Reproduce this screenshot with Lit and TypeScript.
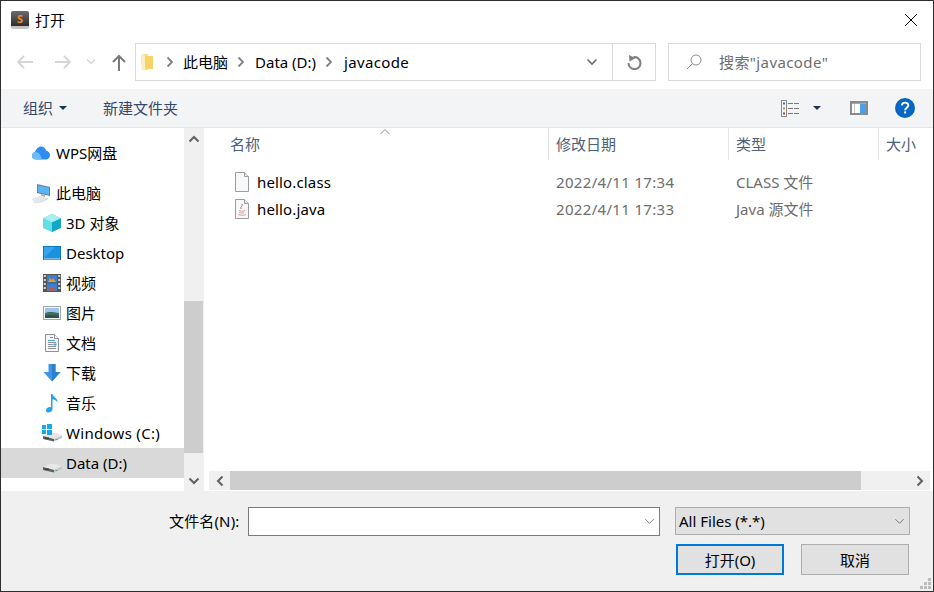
import { LitElement, html, css, svg } from "lit";
import { customElement } from "lit/decorators.js";

const chevron = (d: string, color = "#606060", w = 2, size = 12) => html`<svg width=${size} height=${size} viewBox="0 0 12 12" fill="none" stroke=${color} stroke-width=${w}><path d=${d}/></svg>`;
const CH_UP = "M1.5 8.5 6 4l4.5 4.5";
const CH_DOWN = "M1.5 3.5 6 8l4.5-4.5";
const CH_LEFT = "M8.5 1.5 4 6l4.5 4.5";
const CH_RIGHT = "M3.5 1.5 8 6l-4.5 4.5";

const disk = svg`<path d="M1 13 8 10h6.500L20 12.500 12 16z" fill="#e6e6e6"/><path d="M1 13 12 16v2.500L1 16z" fill="#5c5f61"/><path d="M12 16l8-3.500V15l-8 3.500z" fill="#c4c7c9"/><rect x="3" y="14.600" width="4" height="1" fill="#333"/><rect x="13.500" y="16" width="2" height="1" fill="#4fb35f"/>`;

const icons: Record<string, unknown> = {
  cloud: html`<svg width="20" height="16" viewBox="0 0 20 16"><path d="M4.5 14.5A3.8 3.8 0 0 1 1 10.6c0-1.9 1.3-3.3 3-3.6C5 4 7.300 1.500 10 1.500c2.600 0 4.700 1.800 5.200 4.300 2.200.3 3.800 2.200 3.800 4.400 0 2.400-1.900 4.300-4.200 4.300z" fill="#2f8cf0"/><path d="M4.500 14.500c-2 0-3.500-1.700-3.500-3.900 0-1.900 1.300-3.300 3-3.600 2.500-.4 4.500 1 5.500 3.500.8 2 1.500 4 1.500 4z" fill="#6dbcf8"/></svg>`,
  pc: html`<svg width="20" height="20" viewBox="0 0 20 20"><path d="M6 1l13 3v9L6 10z" fill="#6b7e8d"/><path d="M7 2.300l11 2.500v7L7 9.300z" fill="#58b4f4"/><path d="M10 11l4 1v2l-4-1z" fill="#a9b2b9"/><path d="M1 16l8-3 8 2-7 4H3z" fill="#e4e6e8"/><path d="M3 19h7l7-4v1l-7 3.500H3z" fill="#c6cacd"/></svg>`,
  cube: html`<svg width="18" height="18" viewBox="0 0 18 18"><path d="M9 0l9 4.300v9.400L9 18 0 13.700V4.300z" fill="#3dd0dc"/><path d="M9 0l9 4.300L9 8.500 0 4.300z" fill="#a4f0f2"/><path d="M9 8.500V18l9-4.300V4.300z" fill="#12a7c4"/><path d="M0 4.300 9 8.500V18L0 13.700z" fill="#62e0e4"/></svg>`,
  desktop: html`<svg width="18" height="14" viewBox="0 0 18 14"><rect width="18" height="14" fill="#0a76c8"/><rect x="1" y="1" width="16" height="11" fill="#35a6ee"/><path d="M1 12 12 1h5v11z" fill="#1d90de"/><rect x="1" y="12.400" width="16" height="1" fill="#bfe3fa"/></svg>`,
  video: html`<svg width="18" height="18" viewBox="0 0 18 18"><rect width="18" height="18" fill="#555"/><g fill="#ddd"><rect x=".8" y="1" width="2" height="2"/><rect x=".8" y="5" width="2" height="2"/><rect x=".8" y="9" width="2" height="2"/><rect x=".8" y="13" width="2" height="2"/><rect x="15.200" y="1" width="2" height="2"/><rect x="15.200" y="5" width="2" height="2"/><rect x="15.200" y="9" width="2" height="2"/><rect x="15.200" y="13" width="2" height="2"/></g><rect x="4" y="1" width="10" height="7.500" fill="#3c7fd8"/><rect x="4" y="9.500" width="10" height="7.500" fill="#3c7fd8"/><path d="M5 8l2-4 2 2 1-2 3 4z" fill="#d9a326"/><path d="M5 16.500l2-4 2 2 1-2 3 4z" fill="#d2562c"/></svg>`,
  image: html`<svg width="18" height="14" viewBox="0 0 18 14"><rect x=".5" y=".5" width="17" height="13" fill="#f4f6f8" stroke="#a4a8ac"/><rect x="2" y="2" width="14" height="10" fill="#9dc4ee"/><path d="M2 7c3-1.500 7-1.500 14 0v5H2z" fill="#3f6f5c"/><path d="M2 9.500c5-1 9-.5 14 0V12H2z" fill="#2f5248"/></svg>`,
  doc: html`<svg width="14" height="18" viewBox="0 0 14 18"><path d="M.5.500h9l4 4v13H.5z" fill="#f4f5f6" stroke="#8d9296"/><path d="M9.500.500v4h4" fill="#fff" stroke="#8d9296"/><g stroke="#4aa0dc"><path d="M5 3.500h3"/><path d="M3 6.500h7"/></g><g stroke="#8d9296"><path d="M3 8.500h8M3 10.500h5M3 12.500h8M3 14.500h8"/></g><rect x="8.500" y="9.500" width="3" height="2" fill="#4aa0dc"/></svg>`,
  down: html`<svg width="18" height="18" viewBox="0 0 18 18"><path d="M5.500 0h7v8H17.500L9 17.500.5 8h5z" fill="#3e95e6"/><path d="M9 0h3.500v8h5L9 17.500z" fill="#2e7fcf"/></svg>`,
  music: html`<svg width="12" height="19" viewBox="0 0 12 19"><path d="M5 0h1.500c.4 3 5.500 4 5 8.500C10.500 6.500 8.500 5.500 6.500 5.200V15c0 2.200-2 3.600-4 3.600C1 18.600 0 17.700 0 16.400c0-2 2-3.400 3.800-3.400.5 0 .9.100 1.200.2z" fill="#22a4f0"/></svg>`,
  win: html`<svg width="20" height="19" viewBox="0 0 20 19"><g transform="translate(0 -1)">${disk}</g><g fill="#14a9ee"><rect x="0" y="1" width="4" height="4"/><rect x="5" y="0" width="5" height="5"/><rect x="0" y="6" width="4" height="4"/><rect x="5" y="6" width="5" height="5"/></g></svg>`,
  disk: html`<svg width="20" height="19" viewBox="0 0 20 19">${disk}</svg>`,
};

const nav = [
  { icon: "cloud", label: "WPS网盘", top: true },
  { icon: "pc", label: "此电脑", top: true, gap: true },
  { icon: "cube", label: "3D 对象" },
  { icon: "desktop", label: "Desktop" },
  { icon: "video", label: "视频" },
  { icon: "image", label: "图片" },
  { icon: "doc", label: "文档" },
  { icon: "down", label: "下载" },
  { icon: "music", label: "音乐" },
  { icon: "win", label: "Windows (C:)", wide: true },
  { icon: "disk", label: "Data (D:)" , selected: true },
];

const blankFile = html`<svg width="16" height="20" viewBox="0 0 16 20"><path d="M1.500.500h9l4 4v15h-13z" fill="#f6f8fa" stroke="#9a9ea2"/><path d="M10.500.500v4h4" fill="#e8e8e8" stroke="#9a9ea2"/></svg>`;
const javaFile = html`<svg width="16" height="20" viewBox="0 0 16 20"><path d="M1.500.500h9l4 4v15h-13z" fill="#f6f8fa" stroke="#9a9ea2"/><path d="M10.500.500v4h4" fill="#e8e8e8" stroke="#9a9ea2"/><path d="M8 5c1 2-2 3-1 5" fill="none" stroke="#dc6b60"/><path d="M5 11.500c2 1 4 1 6 0M5 13.500c2 .8 4 .8 5 0M4 15.500c3 1 6 1 8 0" fill="none" stroke="#e59a92"/></svg>`;

const files = [
  { name: "hello.class", date: "2022/4/11 17:34", type: "CLASS 文件", icon: blankFile },
  { name: "hello.java", date: "2022/4/11 17:33", type: "Java 源文件", icon: javaFile },
];

@customElement("app-root")
export class AppRoot extends LitElement {
  static styles = css`
    :host {
      display: flex;
      flex-direction: column;
      box-sizing: border-box;
      width: 934px;
      height: 592px;
      border: 1px solid #2f2f2f;
      background: #fff;
      overflow: hidden;
      font: 15px/20px "Noto Sans", "Noto Sans CJK SC", sans-serif;
      color: #000;
    }
    svg { display: block; flex: none; }
    .title { height: 37px; display: flex; align-items: center; flex: none; }
    .app-icon { margin-left: 10px; width: 18px; height: 18px; border-radius: 2px; background: linear-gradient(#6a6a6a, #2c2c2c 85%, #c4c4c4 86%); display: flex; align-items: center; justify-content: center; color: #f08c25; font-size: 11px; line-height: 15px; font-weight: 700; padding-bottom: 3px; box-sizing: border-box; }
    .title-text { margin-left: 6px; flex: 1; }
    .close { margin-right: 15px; }
    .navbar { height: 51px; flex: none; display: flex; align-items: flex-start; padding-top: 5px; box-sizing: border-box; }
    .navbtns { width: 134px; height: 38px; display: flex; align-items: center; flex: none; }
    .navbtns svg:nth-child(1) { margin-left: 15px; }
    .navbtns svg:nth-child(2) { margin-left: 20px; }
    .navbtns svg:nth-child(3) { margin-left: 14px; }
    .navbtns svg:nth-child(4) { margin-left: 16px; }
    .address { width: 521px; height: 38px; box-sizing: border-box; border: 1px solid #d9d9d9; display: flex; align-items: center; flex: none; }
    .address .folder { margin-left: 5px; }
    .crumb { margin-left: 7px; margin-right: 8px; }
    .crumb-first { margin-left: 11px; margin-right: 7px; }
    .crumb-last { margin-left: 7px; margin-right: 9px; }
    .stretched { letter-spacing: .35px; }
    .path-fill { flex: 1; }
    .addr-chev { margin-right: 14px; }
    .refresh { width: 42px; height: 36px; border-left: 1px solid #d9d9d9; display: flex; align-items: center; justify-content: center; }
    .search { margin-left: 12px; width: 253px; height: 38px; box-sizing: border-box; border: 1px solid #d9d9d9; display: flex; align-items: center; flex: none; color: #6d6d6d; letter-spacing: .4px; }
    .search svg { margin-left: 17px; margin-right: 17px; }
    .toolbar { height: 39px; flex: none; box-sizing: border-box; background: #f3f4f6; border-bottom: 1px solid #e6e6e6; display: flex; align-items: center; color: #33496b; }
    .tb-org { margin-left: 22px; }
    .caret { margin-left: 6px; width: 0; height: 0; border: 4px solid transparent; border-top: 4px solid #1d3557; border-bottom: 0; }
    .tb-new { margin-left: 36px; flex: 1; }
    .tb-view { margin-right: 14px; }
    .tb-caret { margin-left: 0; margin-right: 29px; }
    .tb-pane { margin-right: 27px; }
    .tb-help { margin-right: 18px; }
    .main { flex: 1; min-height: 0; display: flex; }
    .sidebar { width: 183px; flex: none; padding-top: 10px; box-sizing: border-box; }
    .row { height: 30px; display: flex; align-items: center; white-space: nowrap; }
    .row.gap { margin-top: 10px; }
    .row.selected { background: #d9d9d9; }
    .row.wide { letter-spacing: .3px; }
    .row .ico { width: 20px; display: flex; justify-content: center; align-items: center; flex: none; margin-left: 41px; margin-right: 4px; }
    .row.top .ico { margin-left: 30px; margin-right: 5px; }
    .vscroll { width: 20px; flex: none; background: #f0f0f0; display: flex; flex-direction: column; }
    .sbtn { height: 21px; width: 19px; display: flex; align-items: center; justify-content: center; flex: none; }
    .vspace1 { height: 152px; flex: none; }
    .vthumb { height: 152px; width: 19px; flex: none; background: #cdcdcd; }
    .vspace2 { flex: 1; }
    .splitter { width: 5px; flex: none; }
    .content { flex: 1; min-width: 0; display: flex; flex-direction: column; position: relative; }
    .sort { position: absolute; left: 170px; top: 0; }
    .list { flex: 1; min-height: 0; overflow: hidden; }
    .cols { display: grid; grid-template-columns: 340px 180px 150px 1fr; }
    .head { height: 32px; color: #4c607a; }
    .head > div { display: flex; align-items: center; box-sizing: border-box; padding-left: 7px; border-right: 1px solid #e5e5e5; white-space: nowrap; overflow: hidden; }
    .head > div:first-child { padding-left: 21px; }
    .head > div:last-child { border-right: 0; }
    .rows { padding-top: 8px; }
    .file { height: 27px; align-items: center; color: #6d6d6d; }
    .file > div { padding-left: 7px; white-space: nowrap; }
    .file .date { letter-spacing: .33px; }
    .file .fname { display: flex; align-items: center; padding-left: 25px; color: #000; letter-spacing: .15px; }
    .file .fname svg { margin-right: 7px; }
    .hscroll { height: 19px; flex: none; width: 721px; display: flex; background: #f0f0f0; margin-bottom: 1px; align-items: center; }
    .hbtn { width: 21px; height: 19px; display: flex; align-items: center; justify-content: center; flex: none; }
    .hthumb { width: 631px; height: 19px; background: #cdcdcd; flex: none; }
    .hspace { flex: 1; display: flex; justify-content: flex-end; }
    .bottom { height: 100px; flex: none; background: #f0f0f0; box-sizing: border-box; padding-top: 16px; position: relative; }
    .line1 { display: flex; align-items: flex-start; }
    .fn-label { margin-left: 168px; line-height: 29px; white-space: nowrap; width: 79px; flex: none; letter-spacing: .15px; }
    .fn-input { width: 412px; height: 29px; box-sizing: border-box; background: #fff; border: 1px solid #7a7a7a; display: flex; align-items: center; justify-content: flex-end; padding-right: 4px; flex: none; }
    .filter { margin-left: 15px; width: 235px; height: 28px; box-sizing: border-box; background: #e1e1e1; border: 1px solid #adadad; display: flex; align-items: center; justify-content: space-between; padding: 0 4px 0 3px; flex: none; }
    .line2 { display: flex; margin-top: 8px; padding-left: 675px; }
    .btn { width: 108px; height: 31px; box-sizing: border-box; background: #e1e1e1; border: 1px solid #adadad; display: flex; align-items: center; justify-content: center; flex: none; }
    .btn.primary { border: 2px solid #0078d7; }
    .btn + .btn { margin-left: 17px; }
    .grip { position: absolute; right: 1px; bottom: 1px; }
  `;

  render() {
    return html`
      <div class="title">
        <div class="app-icon">S</div>
        <div class="title-text">打开</div>
        <svg class="close" width="14" height="14" viewBox="0 0 14 14" stroke="#000" stroke-width="1"><path d="M1 1l12 12M13 1 1 13"/></svg>
      </div>
      <div class="navbar">
        <div class="navbtns">
          <svg width="18" height="14" viewBox="0 0 18 14" fill="none" stroke="#d6d6d6" stroke-width="2"><path d="M17 7H2M8 1 2 7l6 6"/></svg>
          <svg width="18" height="14" viewBox="0 0 18 14" fill="none" stroke="#d6d6d6" stroke-width="2"><path d="M1 7h15M10 1l6 6-6 6"/></svg>
          <svg width="10" height="8" viewBox="0 0 10 8" fill="none" stroke="#d6d6d6" stroke-width="1.500"><path d="M1 1.500l4 4 4-4"/></svg>
          <svg width="14" height="17" viewBox="0 0 14 17" fill="none" stroke="#7a7a7a" stroke-width="2"><path d="M7 17V2M1 8l6-6 6 6"/></svg>
        </div>
        <div class="address">
          <svg class="folder" width="12" height="18" viewBox="0 0 12 18"><path d="M0 1h7v16H1z" fill="#f7dd8e"/><path d="M4 3h8v13H4z" fill="#f8d368"/><path d="M0 1h2l2 2v15l-3-1z" fill="#fbeec2"/></svg>
          <span class="crumb-first">${chevron(CH_RIGHT, "#808080", 1.8, 12)}</span><span>此电脑</span>
          <span class="crumb">${chevron(CH_RIGHT, "#808080", 1.8, 12)}</span><span>Data (D:)</span>
          <span class="crumb-last">${chevron(CH_RIGHT, "#808080", 1.8, 12)}</span><span class="stretched">javacode</span>
          <span class="path-fill"></span>
          <span class="addr-chev">${chevron(CH_DOWN, "#6d6d6d", 1.6, 12)}</span>
          <div class="refresh">
            <svg width="15" height="15" viewBox="0 0 15 15" fill="none"><path d="M6.500 2.200A6 6 0 1 1 1.500 8" stroke="#808080" stroke-width="2"/><path d="M2 0l6.500 3.200L2.500 6.500z" fill="#808080"/></svg>
          </div>
        </div>
        <div class="search">
          <svg width="16" height="16" viewBox="0 0 16 16" fill="none" stroke="#8a8a8a"><circle cx="10" cy="6" r="5"/><path d="M6.400 9.600 1 15"/></svg>
          <span>搜索"javacode"</span>
        </div>
      </div>
      <div class="toolbar">
        <span class="tb-org">组织</span><span class="caret"></span>
        <span class="tb-new">新建文件夹</span>
        <svg class="tb-view" width="18" height="17" viewBox="0 0 18 17" fill="none"><rect x=".5" y=".5" width="5" height="16" fill="#f4f4f4" stroke="#8a8a8a"/><rect x="2" y="2.500" width="2" height="2" fill="#4a6fb5"/><rect x="2" y="7.500" width="2" height="2" fill="#b59a3a"/><rect x="2" y="12.500" width="2" height="2" fill="#b5403a"/><path d="M7 3.500h11M7 8.500h11M7 13.500h11" stroke="#7a7a7a" stroke-dasharray="5 1"/></svg>
        <span class="caret tb-caret"></span>
        <svg class="tb-pane" width="18" height="14" viewBox="0 0 18 14"><rect x="1" y="1" width="16" height="12" fill="#fff" stroke="#8a8a8a" stroke-width="2"/><rect x="10" y="3" width="6" height="9" fill="#4a9fe8"/><rect x="2" y="2" width="14" height="1" fill="#a8a8a8"/><rect x="4" y="3" width="1" height="9" fill="#c8c8c8"/></svg>
        <svg class="tb-help" width="20" height="20" viewBox="0 0 20 20"><circle cx="10" cy="10" r="10" fill="#0a62b8"/><circle cx="10" cy="10" r="8.500" fill="#0867c4"/><path d="M6.800 7.300c.3-1.800 1.500-2.700 3.300-2.700 1.900 0 3.200 1.100 3.200 2.700 0 2.400-3.100 2.400-3.100 5" fill="none" stroke="#fff" stroke-width="1.900"/><rect x="9.100" y="13.400" width="2" height="2" fill="#fff"/></svg>
      </div>
      <div class="main">
        <div class="sidebar">
          ${nav.map(
            (n) => html`<div class="row ${n.top ? "top" : ""} ${n.gap ? "gap" : ""} ${n.selected ? "selected" : ""} ${n.wide ? "wide" : ""}"><span class="ico">${icons[n.icon]}</span><span>${n.label}</span></div>`
          )}
        </div>
        <div class="vscroll">
          <div class="sbtn">${chevron(CH_UP)}</div>
          <div class="vspace1"></div>
          <div class="vthumb"></div>
          <div class="vspace2"></div>
          <div class="sbtn">${chevron(CH_DOWN)}</div>
        </div>
        <div class="splitter"></div>
        <div class="content">
          <svg class="sort" width="12" height="7" viewBox="0 0 12 7" fill="none" stroke="#8a8a8a"><path d="M1.500 6 6 1.500 10.500 6"/></svg>
          <div class="list">
            <div class="cols head"><div>名称</div><div>修改日期</div><div>类型</div><div>大小</div></div>
            <div class="rows">
              ${files.map(
                (f) => html`<div class="cols file"><div class="fname">${f.icon}<span>${f.name}</span></div><div class="date">${f.date}</div><div>${f.type}</div><div></div></div>`
              )}
            </div>
          </div>
          <div class="hscroll">
            <div class="hbtn">${chevron(CH_LEFT)}</div>
            <div class="hthumb"></div>
            <div class="hspace"><div class="hbtn">${chevron(CH_RIGHT)}</div></div>
          </div>
        </div>
      </div>
      <div class="bottom">
        <div class="line1">
          <div class="fn-label">文件名(N):</div>
          <div class="fn-input">${chevron(CH_DOWN, "#6d6d6d", 1, 11)}</div>
          <div class="filter"><span>All Files (*.*)</span>${chevron(CH_DOWN, "#6d6d6d", 1, 11)}</div>
        </div>
        <div class="line2">
          <div class="btn primary">打开(O)</div>
          <div class="btn">取消</div>
        </div>
        <svg class="grip" width="12" height="12" viewBox="0 0 12 12" fill="#bcbcbc"><rect x="8" y="0" width="3" height="3"/><rect x="4" y="4" width="3" height="3"/><rect x="8" y="4" width="3" height="3"/><rect x="0" y="8" width="3" height="3"/><rect x="4" y="8" width="3" height="3"/><rect x="8" y="8" width="3" height="3"/></svg>
      </div>
    `;
  }
}
